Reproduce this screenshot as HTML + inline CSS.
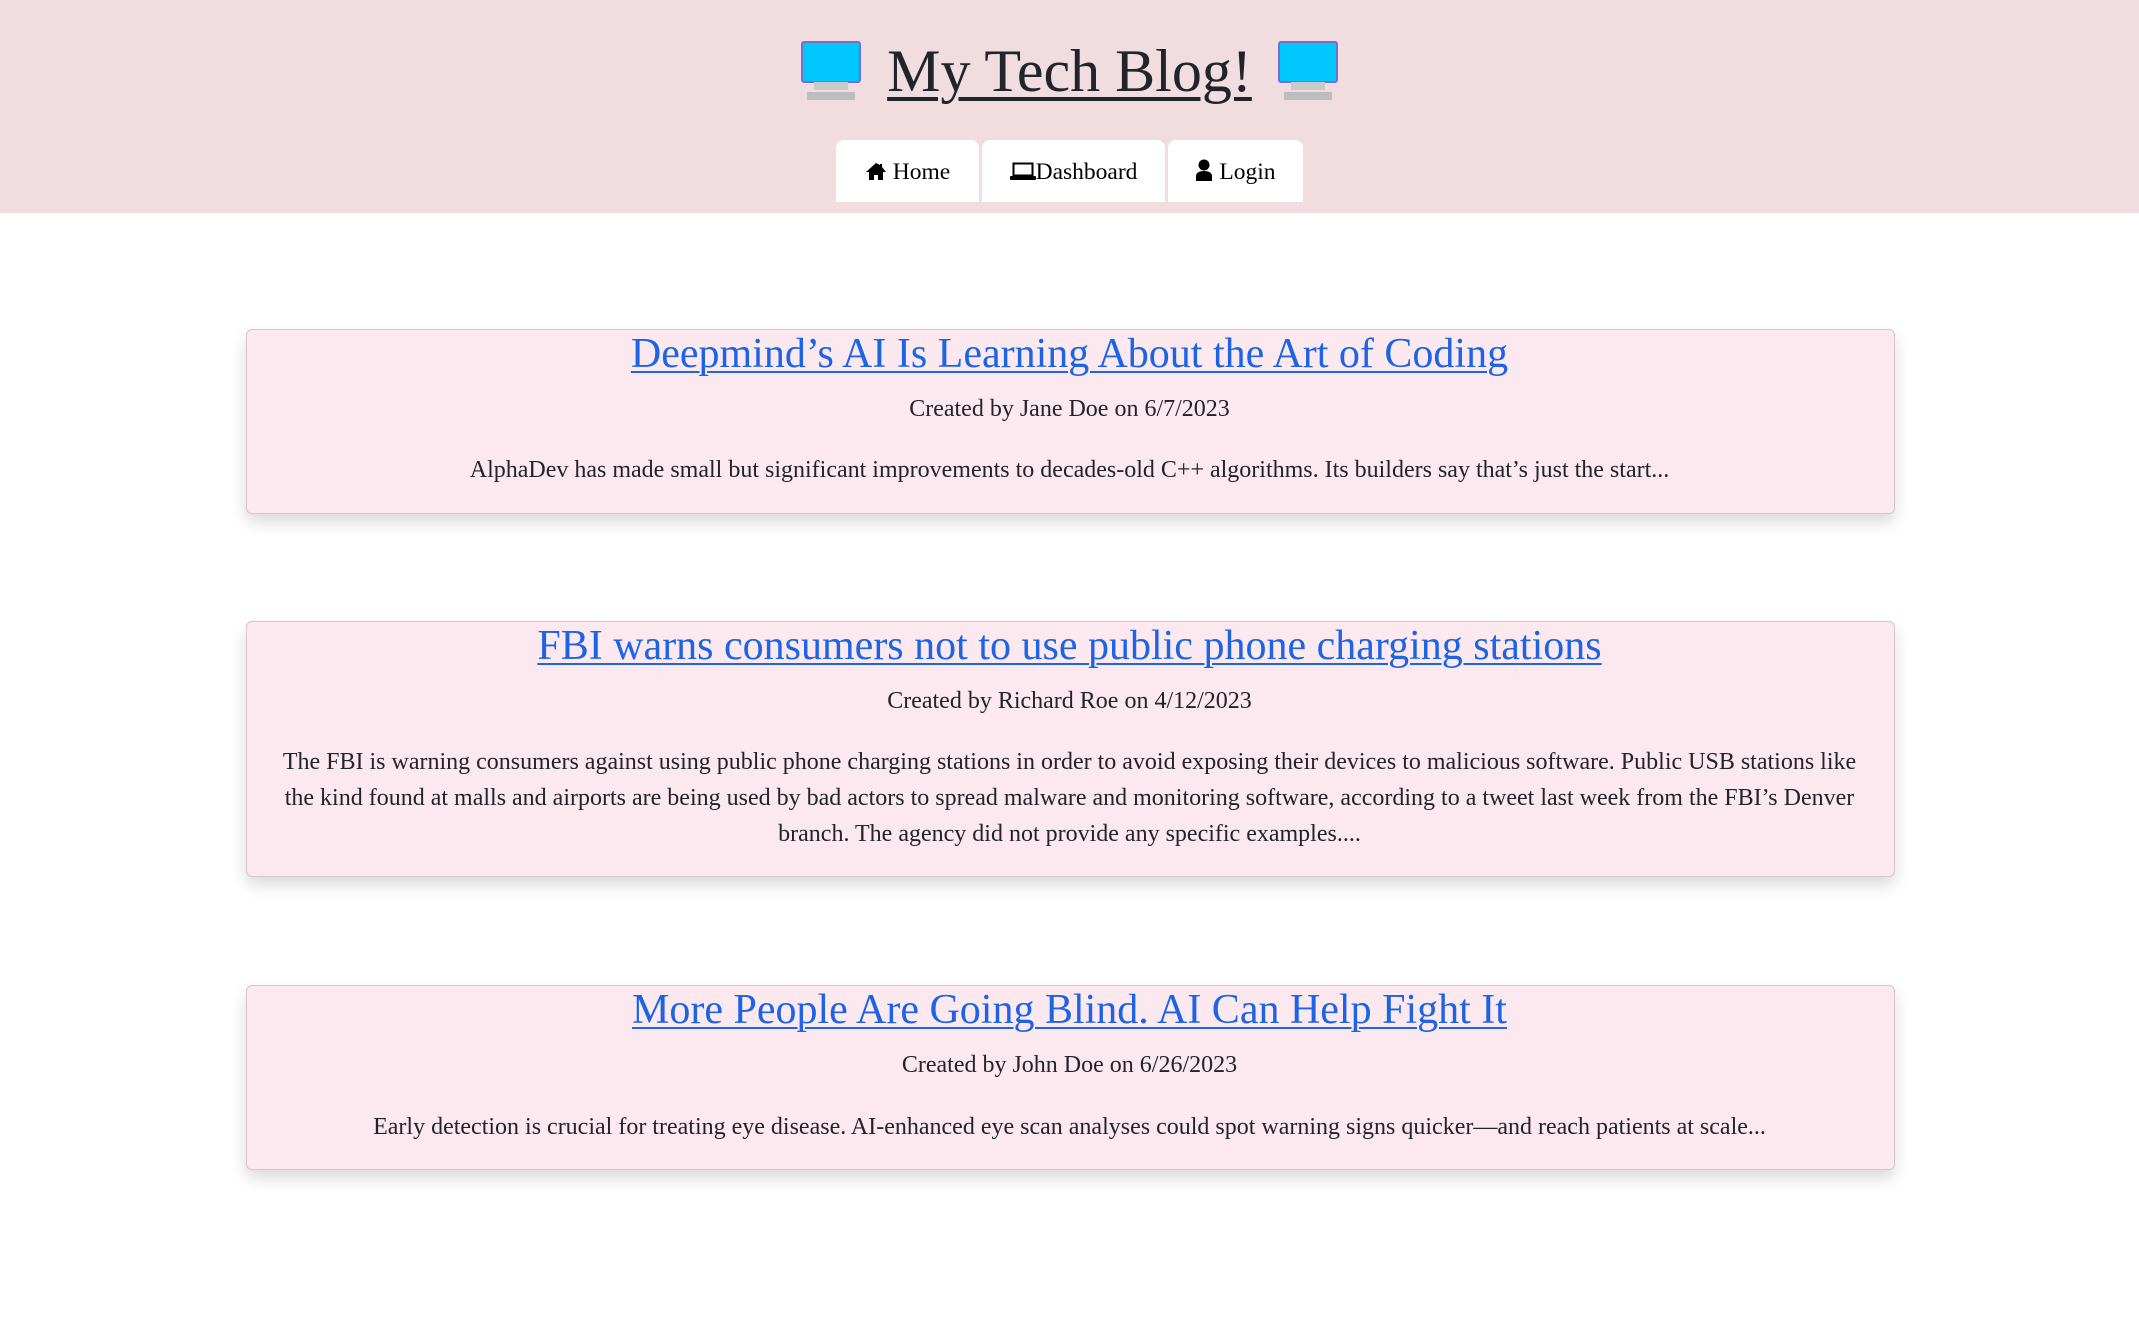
<!DOCTYPE html>
<html><head><meta charset="utf-8"><style>
body{margin:0;width:2139px;height:1329px;background:#fff;font-family:"Liberation Serif",serif;color:#212529;position:relative;overflow:hidden}
.hdr{position:absolute;left:0;top:0;width:2139px;height:213px;background:#f1dce0}
.title{position:absolute;left:0;width:2139px;top:31px;text-align:center;font-size:60px;line-height:80px;color:#212529}
.title a{color:#212529;text-decoration:underline;text-decoration-thickness:4px;text-underline-offset:6px}
.ic{position:absolute;top:41px}
.nav{position:absolute;top:140px;height:62px;background:#fff;border-radius:8px 8px 0 0;font-size:23.5px;line-height:64px;text-align:center;color:#000}
.card{position:absolute;left:246px;width:1647px;background:#fce8ef;border:1px solid #d8c6cc;border-radius:6px;box-shadow:0 8px 16px rgba(0,0,0,.15)}
.t{position:absolute;left:0;width:2139px;text-align:center;white-space:nowrap}
.h{font-size:42px;color:#1d63e6;text-decoration:underline;text-decoration-thickness:2px;text-underline-offset:4px}
.m{font-size:24px}
.p{font-size:24px;line-height:36px}
</style></head><body>
<div class="hdr"></div>
<svg class="ic" style="left:801px" width="60" height="60" viewBox="0 0 60 60"><rect x="1" y="1" width="58" height="40" rx="2" fill="#00c8ff" stroke="#7a6fc8" stroke-width="2"/><rect x="13" y="41" width="34" height="8" fill="#c9c9c9"/><rect x="6" y="51" width="48" height="8" rx="1" fill="#bdbdbd"/></svg>
<svg class="ic" style="left:1278px" width="60" height="60" viewBox="0 0 60 60"><rect x="1" y="1" width="58" height="40" rx="2" fill="#00c8ff" stroke="#7a6fc8" stroke-width="2"/><rect x="13" y="41" width="34" height="8" fill="#c9c9c9"/><rect x="6" y="51" width="48" height="8" rx="1" fill="#bdbdbd"/></svg>
<div class="title"><a>My Tech Blog!</a></div>
<div class="nav" style="left:836px;width:143px"><svg width="22" height="18" viewBox="0 0 22 18" style="vertical-align:-1px"><path d="M11 1L1 10h3v8h5v-5h4v5h5v-8h3L17 5V2h-2v1z" fill="#000"/></svg> Home</div>
<div class="nav" style="left:982px;width:183px"><svg width="26" height="18" viewBox="0 0 26 18" style="vertical-align:-1px"><rect x="3.5" y="1.5" width="19" height="12" fill="none" stroke="#000" stroke-width="2"/><rect x="0" y="14" width="26" height="4" rx="1" fill="#000"/></svg>Dashboard</div>
<div class="nav" style="left:1168px;width:135px"><svg width="18" height="22" viewBox="0 0 18 22" style="vertical-align:-2px"><circle cx="9" cy="6" r="5.5" fill="#000"/><path d="M1 22v-5c0-3 3-5 8-5s8 2 8 5v5z" fill="#000"/></svg> Login</div>

<div class="card" style="top:329px;height:183px"></div>
<div class="t h" style="top:330px">Deepmind’s AI Is Learning About the Art of Coding</div>
<div class="t m" style="top:396px">Created by Jane Doe on 6/7/2023</div>
<div class="t p" style="top:452px">AlphaDev has made small but significant improvements to decades-old C++ algorithms. Its builders say that’s just the start...</div>

<div class="card" style="top:621px;height:254px"></div>
<div class="t h" style="top:622px">FBI warns consumers not to use public phone charging stations</div>
<div class="t m" style="top:688px">Created by Richard Roe on 4/12/2023</div>
<div class="t p" style="top:744px">The FBI is warning consumers against using public phone charging stations in order to avoid exposing their devices to malicious software. Public USB stations like<br>the kind found at malls and airports are being used by bad actors to spread malware and monitoring software, according to a tweet last week from the FBI’s Denver<br>branch. The agency did not provide any specific examples....</div>

<div class="card" style="top:985px;height:183px"></div>
<div class="t h" style="top:986px">More People Are Going Blind. AI Can Help Fight It</div>
<div class="t m" style="top:1052px">Created by John Doe on 6/26/2023</div>
<div class="t p" style="top:1109px">Early detection is crucial for treating eye disease. AI-enhanced eye scan analyses could spot warning signs quicker—and reach patients at scale...</div>
</body></html>
